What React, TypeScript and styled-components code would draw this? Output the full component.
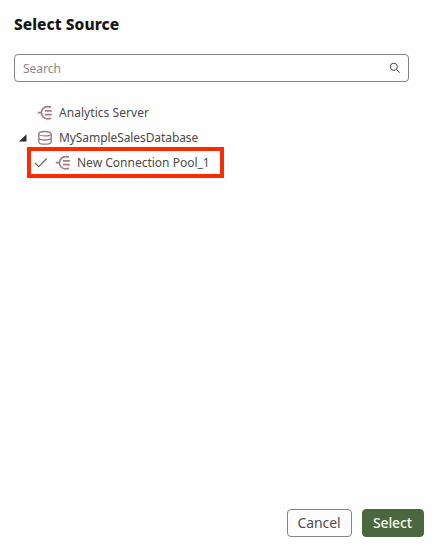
import React from 'react';
import styled, { createGlobalStyle, css } from 'styled-components';

const GlobalStyle = createGlobalStyle`
  * { box-sizing: border-box; }
  body {
    margin: 0;
    background: #fefefe;
    font-family: 'Noto Sans', 'Open Sans', sans-serif;
    color: #4c4a4a;
  }
`;

const Dialog = styled.main`
  display: flex;
  flex-direction: column;
  width: 439px;
  height: 553px;
  padding: 12px 15px 16px 14px;
`;

const Title = styled.h1`
  margin: 0;
  height: 24px;
  font-size: 15.5px;
  line-height: 24px;
  font-weight: 800;
  letter-spacing: 0.05px;
  color: #161513;
`;

const SearchField = styled.label`
  display: flex;
  align-items: center;
  width: 395px;
  height: 28px;
  margin-top: 18px;
  padding: 0 7px 0 8px;
  border: 1px solid #858383;
  border-radius: 4px;
  background: #fff;
`;

const SearchInput = styled.input`
  flex: 1;
  min-width: 0;
  padding: 2px 0 0;
  border: 0;
  outline: 0;
  background: transparent;
  font: 12px/18px 'Noto Sans', sans-serif;
  &::placeholder { color: #8c8a8a; opacity: 1; }
`;

const Tree = styled.ul`
  display: flex;
  flex-direction: column;
  list-style: none;
  margin: 18px 0 0;
  padding: 0;
`;

const Row = styled.li<{ $highlighted?: boolean }>`
  display: flex;
  align-items: center;
  height: 25px;
  padding-left: 4px;
  ${({ $highlighted }) => $highlighted && css`
    width: 197px;
    height: 31px;
    margin: -3px 0 0 13px;
    padding-left: 2px;
    border: 4px solid #ff2a00;
  `}
`;

const Marker = styled.span<{ $width: number }>`
  display: flex;
  flex: none;
  width: ${({ $width }) => $width}px;
`;

const SourceIcon = styled.span`
  display: flex;
  flex: none;
  width: 22px;
`;

const Label = styled.span<{ $spacing: number }>`
  padding-top: 1px;
  font-size: 12px;
  line-height: 18px;
  letter-spacing: ${({ $spacing }) => $spacing}px;
  white-space: nowrap;
`;

const Footer = styled.footer`
  display: flex;
  justify-content: flex-end;
  gap: 10px;
  margin-top: auto;
`;

const Button = styled.button<{ $primary?: boolean }>`
  width: ${({ $primary }) => ($primary ? 62 : 65)}px;
  height: 28px;
  padding: 0 1px 0 0;
  border: 1px solid ${({ $primary }) => ($primary ? '#4b673d' : '#858383')};
  border-radius: 4px;
  background: ${({ $primary }) => ($primary ? '#4b673d' : '#fefdfd')};
  color: ${({ $primary }) => ($primary ? '#f4f7ee' : '#504d4d')};
  font: ${({ $primary }) => ($primary ? 500 : 400)} 14px/20px 'Noto Sans', sans-serif;
  letter-spacing: -0.1px;
`;

const ConnectionIcon = () => (
  <svg width="16" height="16" viewBox="0 0 16 16" fill="none" stroke="#a87c87" strokeWidth="1.7">
    <path d="M14 2.1C12.8 1.7 11.7 1.6 10.5 1.6a6.1 6.1 0 0 0 0 12.2c1.2 0 2.3-.1 3.5-.5" />
    <path d="M0.8 7.7h3.6M8 5.8h6.8M8 9.7h6.8" />
  </svg>
);

const DatabaseIcon = () => (
  <svg width="16" height="16" viewBox="0 0 16 16" fill="none" stroke="#9c7985" strokeWidth="1.3">
    <ellipse cx="8" cy="3.7" rx="6.2" ry="2.2" />
    <path d="M1.8 3.7v8.3c0 1.2 2.8 2.2 6.2 2.2s6.2-1 6.2-2.2V3.7M1.8 7.8c0 1.2 2.8 2.2 6.2 2.2s6.2-1 6.2-2.2" />
  </svg>
);

const CheckIcon = () => (
  <svg width="16" height="16" viewBox="0 0 16 16" fill="none" stroke="#626a5c" strokeWidth="1.2">
    <path d="M2 8l3.7 3.7L13.7 3.5" />
  </svg>
);

const ExpandedIcon = () => (
  <svg width="9" height="9" viewBox="0 0 9 9" fill="#312d2a">
    <path d="M8.5 1.2v7.3H1z" />
  </svg>
);

const SearchIcon = () => (
  <svg width="12" height="12" viewBox="0 0 12 12" fill="none" stroke="#454242" strokeWidth="1">
    <circle cx="4.8" cy="4.8" r="3.6" />
    <path d="M7.5 7.5l3.3 3.2" />
  </svg>
);

export default function App() {
  return (
    <>
      <GlobalStyle />
      <Dialog>
        <Title>Select Source</Title>
        <SearchField>
          <SearchInput placeholder="Search" aria-label="Search" />
          <SearchIcon />
        </SearchField>
        <Tree>
          <Row>
            <Marker $width={19} />
            <SourceIcon><ConnectionIcon /></SourceIcon>
            <Label $spacing={0.05}>Analytics Server</Label>
          </Row>
          <Row>
            <Marker $width={19}><ExpandedIcon /></Marker>
            <SourceIcon><DatabaseIcon /></SourceIcon>
            <Label $spacing={-0.08}>MySampleSalesDatabase</Label>
          </Row>
          <Row $highlighted>
            <Marker $width={22}><CheckIcon /></Marker>
            <SourceIcon><ConnectionIcon /></SourceIcon>
            <Label $spacing={0}>New Connection Pool_1</Label>
          </Row>
        </Tree>
        <Footer>
          <Button>Cancel</Button>
          <Button $primary>Select</Button>
        </Footer>
      </Dialog>
    </>
  );
}
